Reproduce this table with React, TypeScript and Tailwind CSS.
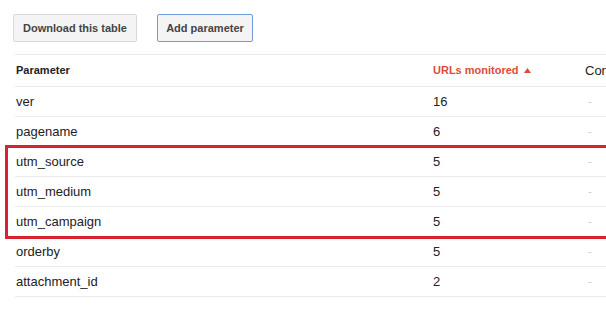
import * as React from "react";

const ROWS = [
  { name: "ver", urls: "16" },
  { name: "pagename", urls: "6" },
  { name: "utm_source", urls: "5" },
  { name: "utm_medium", urls: "5" },
  { name: "utm_campaign", urls: "5" },
  { name: "orderby", urls: "5" },
  { name: "attachment_id", urls: "2" },
];

const font = { fontFamily: '"Liberation Sans", Arial, sans-serif' };

export default function App() {
  return (
    <div className="relative w-[606px] h-[333px] overflow-hidden bg-white text-[#222]" style={font}>
      {/* toolbar */}
      <div className="flex gap-5 pl-[13px] pt-[14px]">
        <button className="h-7 w-[124px] border border-[#d9d9d9] bg-[#f4f4f4] rounded-[2px] text-[11px] font-bold text-[#444]">
          Download this table
        </button>
        <button className="h-7 w-[96px] border border-[#6e9be0] bg-[#f4f4f4] rounded-[2px] text-[11px] font-bold text-[#444]">
          Add parameter
        </button>
      </div>

      {/* table */}
      <div className="ml-[15px] mt-3 w-[620px] border-t border-[#e8e8e8]">
        <div className="grid grid-cols-[418px_152px_1fr] h-[32px] items-center border-b border-[#e8e8e8] text-[11px] font-bold">
          <div className="pl-px">Parameter</div>
          <div className="flex items-center gap-[5px] text-[#dd4b39]">
            URLs monitored
            <svg width="7" height="5" viewBox="0 0 7 5">
              <path d="M0 5 L3.5 0 L7 5 Z" fill="#dd4b39" />
            </svg>
          </div>
          <div className="font-normal text-[13px] whitespace-nowrap">Configured</div>
        </div>
        {ROWS.map((r) => (
          <div
            key={r.name}
            className="grid grid-cols-[418px_152px_1fr] h-[30px] items-center border-b border-[#ebebeb] text-[13px]"
          >
            <div className="pl-px">{r.name}</div>
            <div>{r.urls}</div>
            <div className="pl-[3px] text-[#c8c8c8] text-[11px]">-</div>
          </div>
        ))}
      </div>

      {/* highlight box */}
      <div className="absolute left-[5px] top-[145px] w-[620px] h-[94px] border-[3px] border-[#d8232f]" />
    </div>
  );
}
